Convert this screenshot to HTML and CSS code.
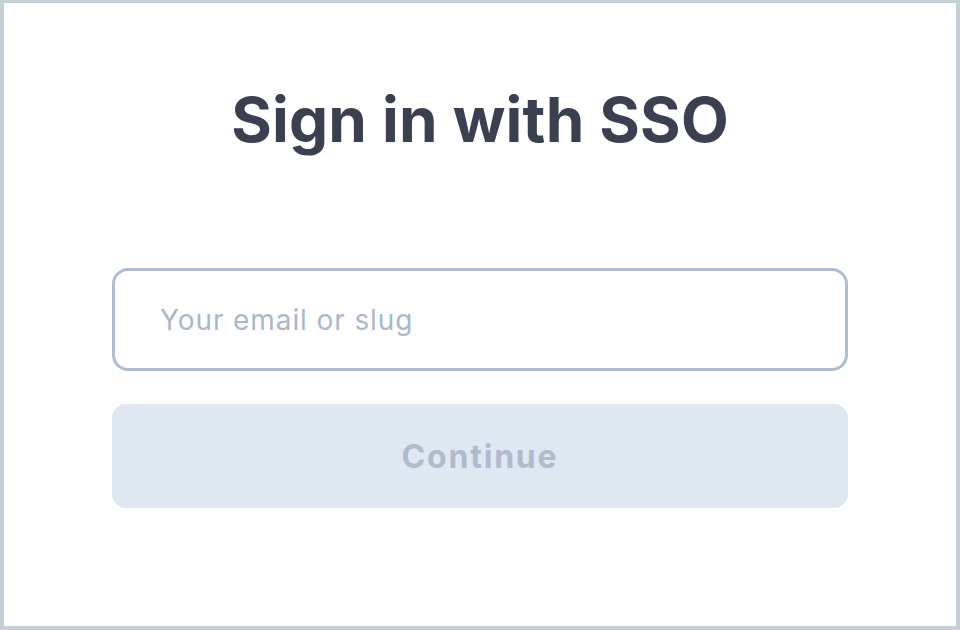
FILE: index.html
```html
<!DOCTYPE html>
<html lang="en">
<head>
<meta charset="utf-8">
<title>Sign in with SSO</title>
<link rel="stylesheet" href="styles.css">
</head>
<body>
<main class="frame">
  <h1 class="title">Sign in with SSO</h1>
  <form class="form">
    <input class="field" type="text" placeholder="Your email or slug">
    <button class="btn" type="button" disabled>Continue</button>
  </form>
</main>
</body>
</html>
```

FILE: styles.css
```css
html, body {
  margin: 0;
  padding: 0;
  background: #ffffff;
}
.frame {
  box-sizing: border-box;
  width: 960px;
  height: 630px;
  border: 4px solid #c6cfd4;
  border-top-width: 3px;
  display: flex;
  flex-direction: column;
  align-items: center;
  font-family: Inter, "Noto Sans", sans-serif;
}
.title {
  margin: 78px 0 0;
  font-size: 62px;
  line-height: 78px;
  font-weight: 700;
  color: #3a4050;
  letter-spacing: 0.2px;
}
.form {
  margin-top: 109px;
  width: 736px;
  display: flex;
  flex-direction: column;
  gap: 33px;
}
.field {
  box-sizing: border-box;
  width: 100%;
  height: 103px;
  border: 3px solid #aebdd0;
  border-radius: 16px;
  padding: 0 0 0 45px;
  font-family: inherit;
  font-size: 28px;
  letter-spacing: 0.9px;
  color: #3a4050;
  outline: none;
  background: #fff;
}
.field::placeholder {
  color: #a9b8cb;
}
.btn {
  width: 100%;
  height: 104px;
  border: none;
  border-radius: 14px;
  background: #dfe8f0;
  color: #aebbcd;
  font-family: inherit;
  font-size: 32px;
  font-weight: 700;
  letter-spacing: 1.8px;
  cursor: default;
}
```
